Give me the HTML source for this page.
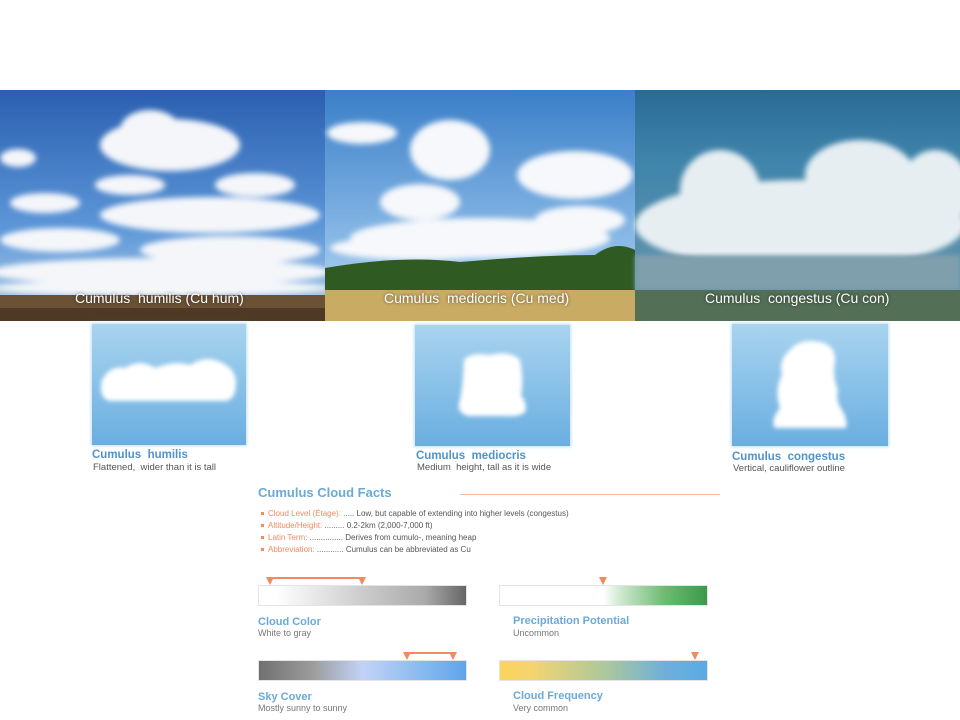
<!DOCTYPE html>
<html><head><meta charset="utf-8"><style>
*{margin:0;padding:0;box-sizing:border-box}
body{width:960px;height:720px;background:#fff;position:relative;overflow:hidden;font-family:"Liberation Sans",sans-serif}
.a{position:absolute}
.cap{position:absolute;color:#fff;font-size:14px;text-shadow:0 0 3px rgba(0,0,0,.6);white-space:nowrap}
.bx{position:absolute;background:linear-gradient(#a9d4ef,#6aaee0);box-shadow:0 0 3px 1px #bfe0f5}
.t1{position:absolute;color:#4f93cc;font-size:11.5px;font-weight:bold;white-space:nowrap}
.t2{position:absolute;color:#555;font-size:9.5px;white-space:nowrap}
.bl{position:absolute;font-size:8px;color:#555;white-space:nowrap}
.bl b{font-weight:normal;color:#ef8a62}
.bl:before{content:"";position:absolute;left:-7px;top:3px;width:3px;height:3px;background:#ef8a62}
.bar{position:absolute;height:21px;border:1px solid #e4e4e4}
.h1{position:absolute;color:#6aaad8;font-size:11px;font-weight:bold;white-space:nowrap}
.h2{position:absolute;color:#777;font-size:9px;white-space:nowrap}
.tri{position:absolute;width:0;height:0;border-left:4px solid transparent;border-right:4px solid transparent;border-top:8px solid #ef8a62}
.ln{position:absolute;height:2px;background:#ef8a62}
</style></head><body>
<svg class="a" style="left:0;top:90px" width="960" height="231" viewBox="0 0 960 231">
<defs>
<linearGradient id="s1" x1="0" y1="0" x2="0" y2="1"><stop offset="0" stop-color="#2a5fb0"/><stop offset=".6" stop-color="#5d97d8"/><stop offset="1" stop-color="#b5cfe8"/></linearGradient>
<linearGradient id="s2" x1="0" y1="0" x2="0" y2="1"><stop offset="0" stop-color="#3a7fc8"/><stop offset=".7" stop-color="#8fbde8"/><stop offset="1" stop-color="#cde0f0"/></linearGradient>
<linearGradient id="s3" x1="0" y1="0" x2="0" y2="1"><stop offset="0" stop-color="#2a6a96"/><stop offset=".3" stop-color="#3f84ab"/><stop offset="1" stop-color="#6d98ab"/></linearGradient>
<filter id="b" x="-20%" y="-20%" width="140%" height="140%"><feGaussianBlur stdDeviation="3"/></filter>
<filter id="b2"><feGaussianBlur stdDeviation="2"/></filter>
</defs>
<rect x="0" y="0" width="325" height="231" fill="url(#s1)"/>
<g fill="#f4f6fa" filter="url(#b)">
<ellipse cx="170" cy="55" rx="70" ry="26"/><ellipse cx="150" cy="40" rx="30" ry="20"/><ellipse cx="18" cy="68" rx="18" ry="9"/>
<ellipse cx="130" cy="95" rx="35" ry="10"/><ellipse cx="255" cy="95" rx="40" ry="12"/>
<ellipse cx="45" cy="113" rx="35" ry="10"/><ellipse cx="210" cy="125" rx="110" ry="18"/>
<ellipse cx="60" cy="150" rx="60" ry="12"/><ellipse cx="230" cy="160" rx="90" ry="14"/>
<ellipse cx="160" cy="182" rx="170" ry="14"/><ellipse cx="160" cy="198" rx="170" ry="8"/>
</g>
<rect x="0" y="205" width="325" height="26" fill="#6b5235"/>
<rect x="0" y="218" width="325" height="13" fill="#4e3a24"/>
<rect x="325" y="0" width="310" height="231" fill="url(#s2)"/>
<g fill="#f6f8fb" filter="url(#b)">
<ellipse cx="362" cy="43" rx="35" ry="11"/><ellipse cx="450" cy="60" rx="40" ry="30"/>
<ellipse cx="575" cy="85" rx="58" ry="24"/><ellipse cx="420" cy="112" rx="40" ry="18"/>
<ellipse cx="580" cy="130" rx="45" ry="14"/><ellipse cx="480" cy="148" rx="130" ry="20"/>
<ellipse cx="420" cy="158" rx="90" ry="12"/>
</g>
<path d="M325 178 Q400 165 460 172 Q540 165 595 165 Q615 150 635 160 V205 H325Z" fill="#2f5a22"/>
<rect x="325" y="200" width="310" height="31" fill="#c9ab63"/>
<rect x="635" y="0" width="325" height="231" fill="url(#s3)"/>
<g fill="#e6eef2" filter="url(#b)">
<ellipse cx="800" cy="135" rx="165" ry="45"/><ellipse cx="720" cy="100" rx="40" ry="40"/>
<ellipse cx="860" cy="85" rx="55" ry="35"/><ellipse cx="935" cy="100" rx="35" ry="40"/>
</g>
<rect x="635" y="165" width="325" height="35" fill="#7f9fad" filter="url(#b2)"/>
<rect x="635" y="200" width="325" height="31" fill="#536f56"/>
</svg>
<div class="cap" style="left:75px;top:290px">Cumulus &nbsp;humilis (Cu hum)</div>
<div class="cap" style="left:384px;top:290px">Cumulus &nbsp;mediocris (Cu med)</div>
<div class="cap" style="left:705px;top:290px">Cumulus &nbsp;congestus (Cu con)</div>

<div class="bx" style="left:92px;top:324px;width:154px;height:121px"></div>
<div class="bx" style="left:415px;top:325px;width:155px;height:121px"></div>
<div class="bx" style="left:732px;top:324px;width:156px;height:122px"></div>
<svg class="a" style="left:0;top:320px" width="960" height="130"><g fill="#fff" filter="url(#b2)">
<path d="M102 60 Q110 45 125 48 Q140 38 155 48 Q175 40 190 45 Q205 35 220 42 Q235 48 236 62 Q236 80 225 81 H110 Q98 78 102 60Z"/>
<path d="M464 40 Q470 32 490 35 Q510 30 520 40 Q524 60 521 75 Q528 85 525 92 Q520 97 505 96 H468 Q455 92 460 80 Q463 65 464 40Z"/>
<path d="M790 30 Q800 18 820 22 Q836 25 835 42 Q832 55 838 70 Q835 80 842 90 Q848 100 846 108 H775 Q770 100 780 88 Q774 70 782 55 Q778 40 790 30Z"/>
</g></svg>

<div class="t1" style="left:92px;top:449px">Cumulus &nbsp;humilis</div>
<div class="t2" style="left:93px;top:462px">Flattened, &nbsp;wider than it is tall</div>
<div class="t1" style="left:416px;top:450px">Cumulus &nbsp;mediocris</div>
<div class="t2" style="left:417px;top:462px">Medium &nbsp;height, tall as it is wide</div>
<div class="t1" style="left:732px;top:451px">Cumulus &nbsp;congestus</div>
<div class="t2" style="left:733px;top:463px">Vertical, cauliflower outline</div>

<div class="a" style="left:258px;top:485px;color:#6aaad8;font-size:13px;font-weight:bold">Cumulus Cloud Facts</div>
<div class="a" style="left:460px;top:494px;width:260px;height:1px;background:#f5b8a0"></div>
<div class="bl" style="left:268px;top:509px"><b>Cloud Level (Étage):</b> ..... Low, but capable of extending into higher levels (congestus)</div>
<div class="bl" style="left:268px;top:521px"><b>Altitude/Height:</b> ......... 0.2-2km (2,000-7,000 ft)</div>
<div class="bl" style="left:268px;top:533px"><b>Latin Term:</b> ............... Derives from cumulo-, meaning heap</div>
<div class="bl" style="left:268px;top:545px"><b>Abbreviation:</b> ............ Cumulus can be abbreviated as Cu</div>

<div class="ln" style="left:270px;top:577px;width:93px"></div>
<div class="tri" style="left:266px;top:577px"></div><div class="tri" style="left:358px;top:577px"></div>
<div class="bar" style="left:258px;top:585px;width:209px;background:linear-gradient(90deg,#fff 8%,#ccc 50%,#aaa 80%,#666)"></div>
<div class="h1" style="left:258px;top:616px">Cloud Color</div>
<div class="h2" style="left:258px;top:628px">White to gray</div>

<div class="tri" style="left:599px;top:577px"></div>
<div class="bar" style="left:499px;top:585px;width:209px;background:linear-gradient(90deg,#fff 50%,#cfe8d2 58%,#6cba70 80%,#3a9a4a)"></div>
<div class="h1" style="left:513px;top:615px">Precipitation Potential</div>
<div class="h2" style="left:513px;top:628px">Uncommon</div>

<div class="ln" style="left:407px;top:652px;width:47px"></div>
<div class="tri" style="left:403px;top:652px"></div><div class="tri" style="left:449px;top:652px"></div>
<div class="bar" style="left:258px;top:660px;width:209px;background:linear-gradient(90deg,#707070,#9a9a9a 25%,#c2d3f6 50%,#90bdf0 75%,#60a4ec)"></div>
<div class="h1" style="left:258px;top:691px">Sky Cover</div>
<div class="h2" style="left:258px;top:703px">Mostly sunny to sunny</div>

<div class="tri" style="left:691px;top:652px"></div>
<div class="bar" style="left:499px;top:660px;width:209px;background:linear-gradient(90deg,#fcd45c,#f5d470 15%,#aec89a 50%,#6eb0da 80%,#5aaae6)"></div>
<div class="h1" style="left:513px;top:690px">Cloud Frequency</div>
<div class="h2" style="left:513px;top:703px">Very common</div>
</body></html>
